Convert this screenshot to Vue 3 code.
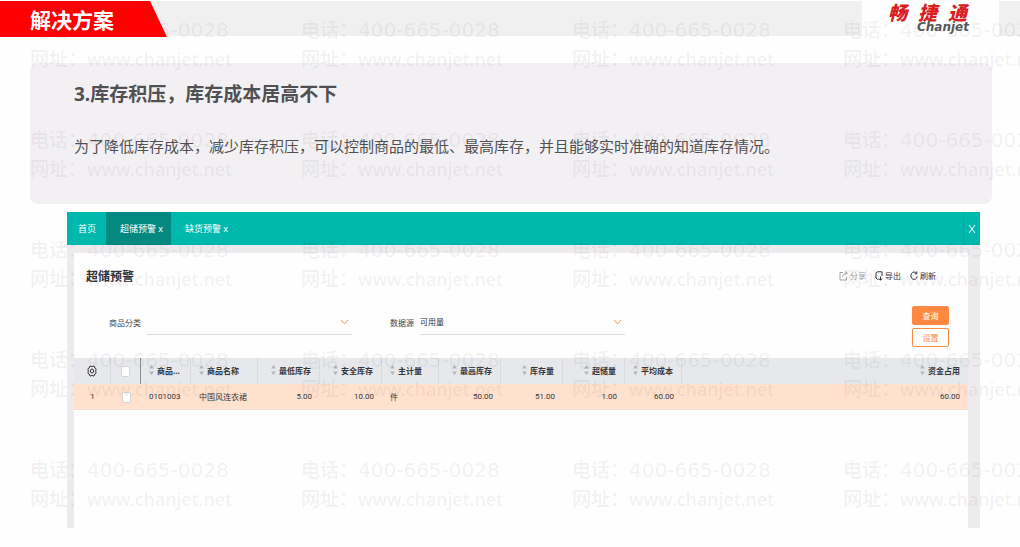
<script setup>
import { ref } from 'vue'

const watermarks = Array.from({ length: 20 }, (_, i) => i)
const category = ref('')
const source = ref('可用量')

const columns = [
  { key: 'code', label: '商品...', align: 'left' },
  { key: 'name', label: '商品名称', align: 'left' },
  { key: 'min', label: '最低库存', align: 'right' },
  { key: 'safe', label: '安全库存', align: 'right' },
  { key: 'unit', label: '主计量', align: 'left' },
  { key: 'max', label: '最高库存', align: 'right' },
  { key: 'stock', label: '库存量', align: 'right' },
  { key: 'over', label: '超储量', align: 'right' },
  { key: 'cost', label: '平均成本', align: 'right' },
  { key: 'amount', label: '资金占用', align: 'right' },
]

const rows = [
  {
    code: '0101003', name: '中国风连衣裙', min: '5.00', safe: '10.00', unit: '件',
    max: '50.00', stock: '51.00', over: '1.00', cost: '60.00', amount: '60.00',
  },
]
</script>

<template>
  <div class="slide">
    <header class="banner">
      <h1 class="ribbon">解决方案</h1>
      <div class="logo">
        <div class="logo-cn"><span>畅</span><span>捷</span><span>通</span></div>
        <div class="logo-en">Chanjet</div>
      </div>
    </header>

    <section class="intro">
      <h2>3.库存积压，库存成本居高不下</h2>
      <p>为了降低库存成本，减少库存积压，可以控制商品的最低、最高库存，并且能够实时准确的知道库存情况。</p>
    </section>

    <main class="app">
      <nav class="tabs">
        <button type="button" class="tab home">首页</button>
        <button type="button" class="tab active">超储预警 <span class="x">x</span></button>
        <button type="button" class="tab">缺货预警 <span class="x">x</span></button>
        <button type="button" class="close" aria-label="关闭">
          <svg width="8" height="10" viewBox="0 0 8 10"><path d="M1 1l6 8M7 1L1 9" /></svg>
        </button>
      </nav>

      <div class="frame">
        <div class="content">
          <div class="titlebar">
            <h3>超储预警</h3>
            <div class="actions">
              <button type="button" class="muted">
                <svg width="9" height="10" viewBox="0 0 9 10"><path d="M4 1.500H1v7.500h6.500V6M3.500 6C4 3.500 5 2.500 8 2M6.200.6L8.300 2 6.500 3.800" /></svg>
                分享
              </button>
              <button type="button">
                <svg width="8" height="10" viewBox="0 0 8 10"><path d="M3.500 8.500H2.500L1 7V2.200L2.200.8H7V5M5.500 5.500v3.500M3.800 7.500L5.500 9.300 7.300 7.500" /></svg>
                导出
              </button>
              <button type="button">
                <svg width="8" height="10" viewBox="0 0 8 10"><path d="M6.500 2.300A3.200 3.700 0 1 0 7.200 5.500M6.800.5v2.300H4.800" /></svg>
                刷新
              </button>
            </div>
          </div>

          <form class="filters" @submit.prevent>
            <div class="field">
              <label for="category">商品分类</label>
              <div class="select">
                <select id="category" v-model="category"><option value=""></option></select>
                <svg width="9" height="6" viewBox="0 0 9 6"><path d="M.8.8l3.700 4 3.700-4" /></svg>
              </div>
            </div>
            <div class="field">
              <label for="source">数据源</label>
              <div class="select">
                <select id="source" v-model="source"><option>可用量</option></select>
                <svg width="9" height="6" viewBox="0 0 9 6"><path d="M.8.8l3.700 4 3.700-4" /></svg>
              </div>
            </div>
            <div class="buttons">
              <button type="submit" class="primary">查询</button>
              <button type="button">设置</button>
            </div>
          </form>

          <table>
            <colgroup>
              <col class="w-index"><col class="w-check"><col class="w-code"><col class="w-name">
              <col class="w-num"><col class="w-num"><col class="w-unit"><col class="w-num">
              <col class="w-num"><col class="w-num"><col class="w-unit"><col>
            </colgroup>
            <thead>
              <tr>
                <th class="center">
                  <svg class="gear" width="10" height="12" viewBox="0 0 10 12"><path d="M3 1h1l1 .8L6 1h1l.8 2 1.200.6v1.200L8.600 6l.4 1.200v1.200L7.800 9 7 11H6l-1-.8-1 .8H3L2.200 9 1 8.400V7.200L1.400 6 1 4.800V3.600L2.200 3z" /><ellipse cx="5" cy="6" rx="1.600" ry="2" /></svg>
                </th>
                <th class="center check"><input type="checkbox" aria-label="全选"></th>
                <th v-for="c in columns" :key="c.key" :class="c.align">
                  <span class="head">
                    <svg width="5" height="10" viewBox="0 0 5 10"><path d="M0 3.500L2.500 0 5 3.500zM0 6.500h5L2.500 10z" /></svg>
                    {{ c.label }}
                  </span>
                </th>
              </tr>
            </thead>
            <tbody>
              <tr v-for="(r, i) in rows" :key="r.code">
                <td class="center num">{{ i + 1 }}</td>
                <td class="center"><input type="checkbox" aria-label="选择"></td>
                <td v-for="c in columns" :key="c.key" :class="[c.align, { num: c.key !== 'name' && c.key !== 'unit' }]">{{ r[c.key] }}</td>
              </tr>
            </tbody>
          </table>
        </div>
      </div>
    </main>

    <div class="watermarks" aria-hidden="true">
      <div v-for="w in watermarks" :key="w" class="mark">
        <div><span>电话：</span><span class="phone">400-665-0028</span></div>
        <div><span>网址：</span><span class="url">www.chanjet.net</span></div>
      </div>
    </div>
  </div>
</template>

<style>
body {
  background: #fefefe;
}
</style>

<style scoped>
.slide {
  position: relative;
  overflow: hidden;
  padding: 1px 0 19px;
  font-family: "Noto Sans", "Noto Sans CJK SC", sans-serif;
  color: #505052;
}
* {
  box-sizing: border-box;
}
h1, h2, h3, p {
  margin: 0;
}
button, select {
  font-family: inherit;
}
button {
  border: 0;
  padding: 0;
  background: none;
  color: inherit;
  cursor: pointer;
}
svg {
  flex: none;
  fill: none;
  stroke: currentColor;
}

.banner {
  display: flex;
  justify-content: space-between;
  height: 35px;
  padding-right: 21px;
  background: #f0f0f0;
}
.ribbon {
  position: relative;
  z-index: 2;
  width: 167px;
  height: 36px;
  padding-left: 30px;
  background: #fe0000;
  clip-path: polygon(0 0, 150px 0, 100% 100%, 0 100%);
  color: #fff;
  font-size: 21px;
  line-height: 38px;
}
.logo {
  width: 137px;
  height: 36px;
  padding-left: 26px;
  background: #fefefe;
  font-style: italic;
  font-weight: 900;
}
.logo-cn {
  display: flex;
  gap: 11px;
  color: #d9201f;
  font-family: "Noto Sans CJK SC", sans-serif;
  font-size: 19px;
  line-height: 21px;
}
.logo-en {
  padding-left: 29px;
  color: #58585a;
  font-family: "DejaVu Sans", sans-serif;
  font-weight: 700;
  font-size: 12px;
  line-height: 11px;
}

.intro {
  margin: 27px 28px 8px 30px;
  height: 141px;
  padding: 16px 44px 0;
  border-radius: 8px;
  background: #f2f0f3;
}
.intro h2 {
  font-size: 19px;
  line-height: 30px;
}
.intro p {
  margin-top: 25px;
  font-size: 15px;
  line-height: 24px;
  white-space: nowrap;
}

.app {
  margin: 0 40px 0 67px;
}
.tabs {
  display: flex;
  height: 33px;
  background: #00b8ab;
  color: #fff;
}
.tab {
  width: 65px;
  padding-left: 14px;
  font-size: 9px;
  text-align: left;
  white-space: nowrap;
}
.tab.home {
  width: 39px;
  padding-left: 11px;
}
.tab.active {
  background: #03897f;
}
.close {
  display: flex;
  align-items: center;
  justify-content: center;
  width: 17px;
  margin-left: auto;
  border-left: 1px solid #08a99d;
}
.frame {
  padding: 8px 12px 0 7px;
  background: #eeebef;
}
.content {
  min-height: 275px;
  background: #fefefe;
}
.titlebar {
  display: flex;
  align-items: center;
  justify-content: space-between;
  height: 45px;
  padding: 0 32px 0 12px;
}
h3 {
  color: #303238;
  font-size: 12px;
}
.actions {
  display: flex;
  gap: 9px;
  color: #303238;
}
.actions button {
  display: flex;
  align-items: center;
  gap: 2px;
  font-size: 8px;
}
.actions .muted {
  color: #a4a4a6;
}

.filters {
  display: flex;
  gap: 38px;
  padding: 8px 19px 11px 35px;
}
.field {
  display: flex;
  align-items: center;
  gap: 6px;
  height: 29px;
  padding-top: 3px;
  flex: 0 1 243px;
}
.field + .field {
  flex-basis: 235px;
}
.field label {
  color: #444;
  font-size: 8px;
  white-space: nowrap;
}
.select {
  display: flex;
  align-items: center;
  flex: 1;
  height: 26px;
  padding-right: 3px;
  border-bottom: 1px solid #dddcde;
}
.select select {
  flex: 1;
  min-width: 0;
  padding: 0;
  border: 0;
  appearance: none;
  background: none;
  color: #303238;
  font-size: 8px;
}
.select svg {
  color: #f6924f;
}
.buttons {
  display: flex;
  flex-direction: column;
  gap: 3px;
  margin-left: auto;
}
.buttons button {
  width: 37px;
  height: 19px;
  border: 1px solid #fb8a48;
  border-radius: 2px;
  color: #fb8a48;
  font-size: 8px;
}
.buttons .primary {
  background: #fe8840;
  color: #fff;
}

table {
  width: 100%;
  table-layout: fixed;
  border-collapse: separate;
  border-spacing: 0;
  color: #36363a;
  font-size: 8px;
}
.w-index { width: 37px; }
.w-check { width: 30px; }
.w-code { width: 50px; }
.w-name { width: 67px; }
.w-num { width: 62px; }
.w-unit { width: 57px; }
th, td {
  height: 26px;
  padding: 0 8px;
  white-space: nowrap;
}
th {
  border-right: 1px solid #d8dadd;
  background: #e7e8eb;
}
th:last-child {
  border-right: 0;
}
th.check {
  border-right-color: #8a8c90;
}
td {
  border-bottom: 1px solid #ecdcd3;
  background: #ffe1ce;
}
.center {
  padding: 0;
  text-align: center;
}
.left { text-align: left; }
.right { text-align: right; }
.head {
  display: inline-flex;
  align-items: center;
  gap: 3px;
}
.head svg {
  fill: #b4b6ba;
  stroke: none;
}
.gear {
  display: inline-block;
  vertical-align: middle;
}
.num {
  font-family: "Liberation Sans Narrow", Roboto, sans-serif;
}
input {
  appearance: none;
  width: 9px;
  height: 11px;
  margin: 0;
  border: 1px solid #d5d5d8;
  border-radius: 2px;
  background: #fff;
  vertical-align: middle;
}

.watermarks {
  position: absolute;
  inset: 16px auto auto 30px;
  z-index: 1;
  display: grid;
  grid-template-columns: repeat(4, 271px);
  grid-auto-rows: 110px;
  color: rgba(70, 60, 70, 0.08);
  font-size: 19px;
  font-weight: 500;
  line-height: 29px;
  pointer-events: none;
}
.mark div {
  display: flex;
  white-space: nowrap;
}
.phone {
  font-family: "DejaVu Sans", sans-serif;
  font-size: 20px;
}
.url {
  font-size: 18px;
}
</style>
